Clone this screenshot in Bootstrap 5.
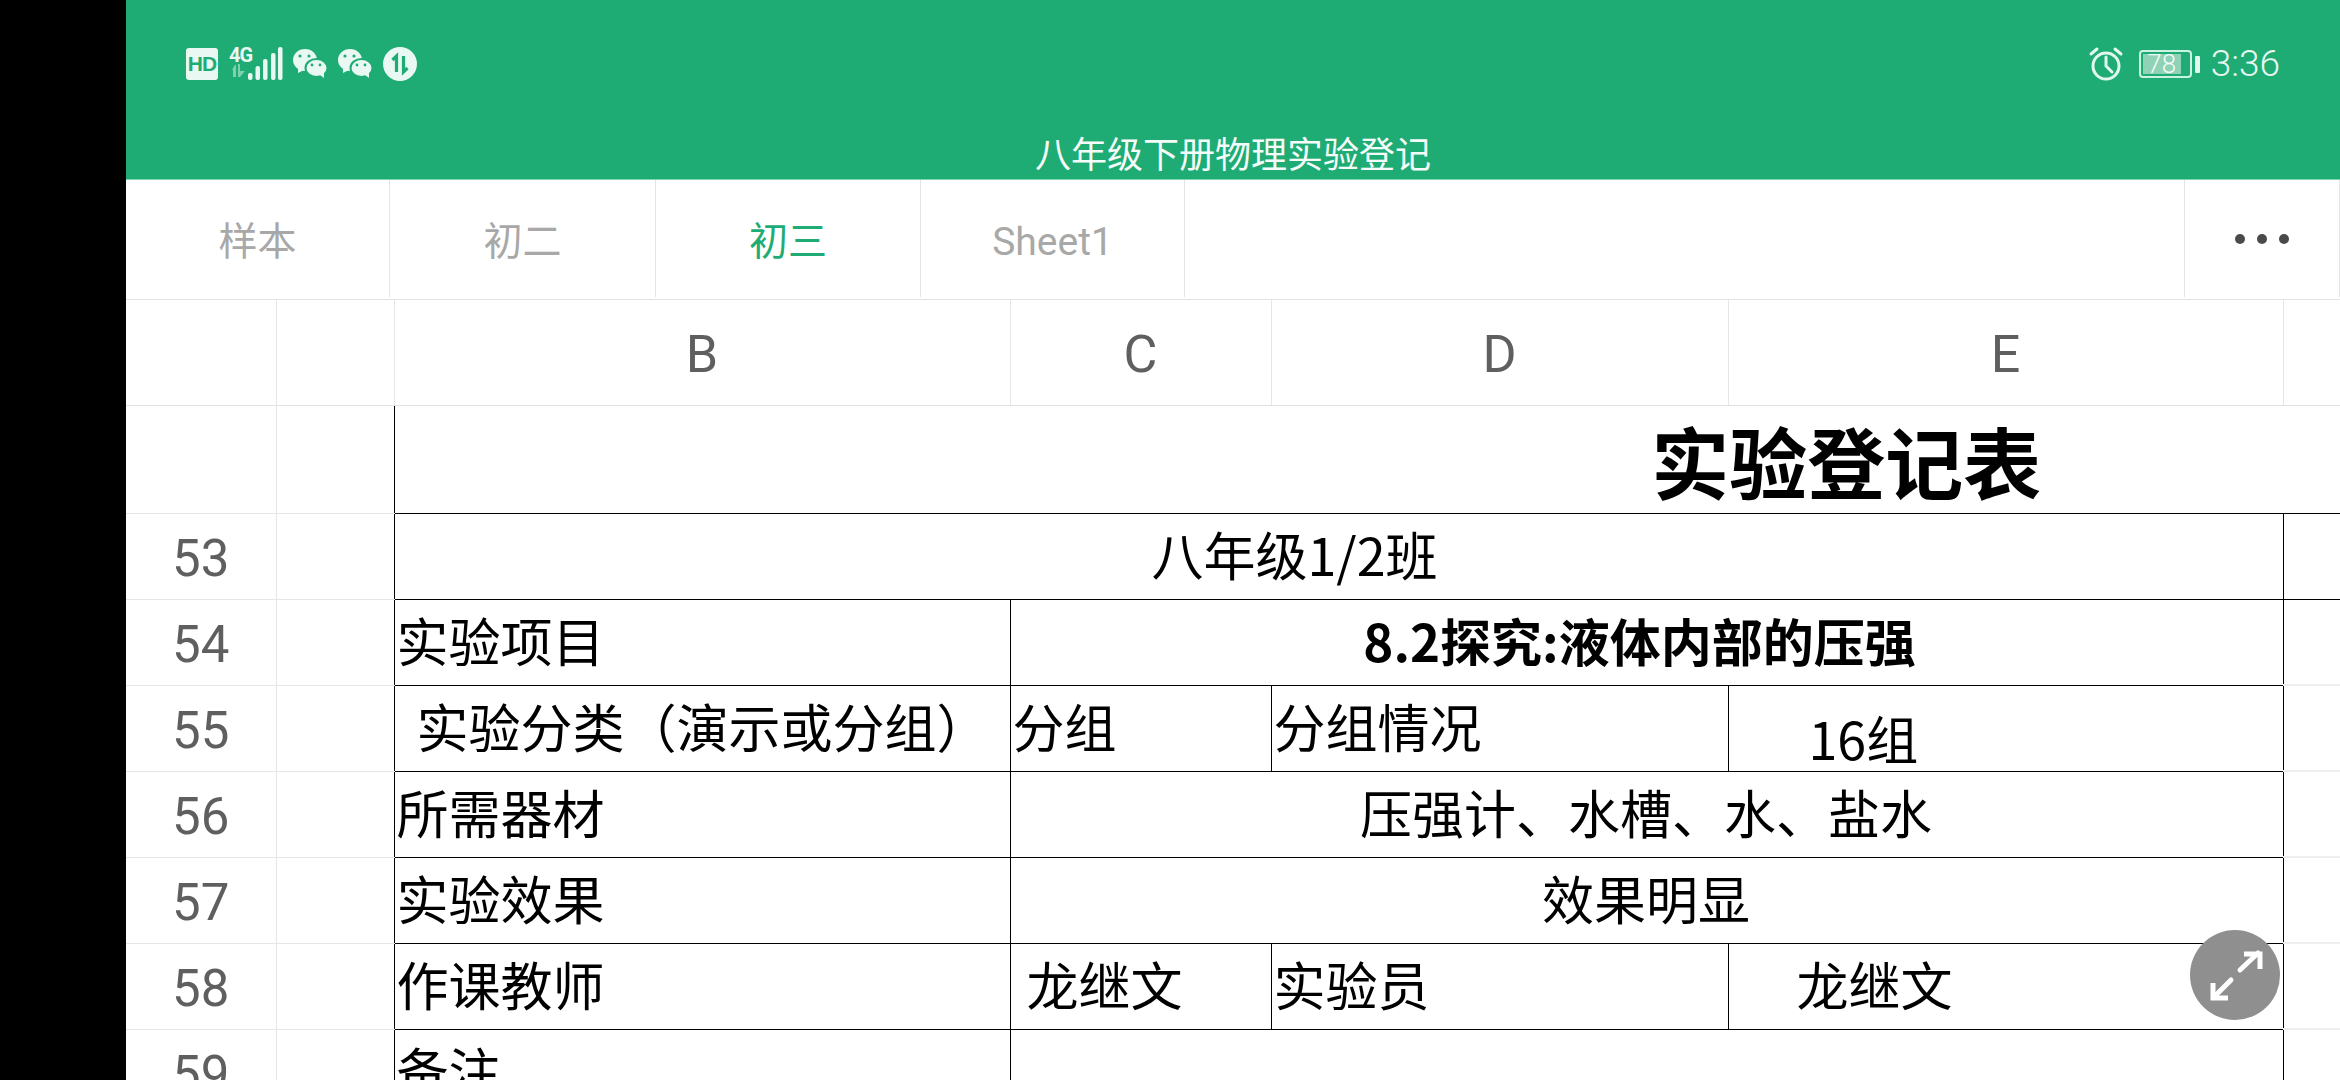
<!DOCTYPE html>
<html lang="zh">
<head>
    <meta charset="UTF-8">
    <title>八年级下册物理实验登记</title>
    <link href="https://cdn.jsdelivr.net/npm/bootstrap@5.3.2/dist/css/bootstrap.min.css" rel="stylesheet">
    <style>
        html, body {
            height: 1080px;
            overflow: hidden;
        }
        body {
            background: #000;
            padding-left: 126px;
            font-family: Roboto, "Noto Sans CJK SC", sans-serif;
        }
        .pantalla {
            height: 1080px;
            background: #fff;
            overflow: hidden;
        }
        .barra-verde {
            height: 180px;
            background: #1fac74;
            color: #fff;
            border-bottom: 1px solid #7fd6b2;
        }
        .barra-estado {
            height: 128px;
            padding: 0 60px 0 60px;
        }
        .titulo-doc {
            font-size: 36px;
            line-height: 50px;
            padding-top: 3px;
            text-align: center;
            color: #f4fbf8;
        }
        .icono-hd {
            width: 32px;
            height: 32px;
            background: #eaf8f3;
            color: #1fac74;
            border-radius: 3px;
            font: 700 21px/32px "Liberation Sans", sans-serif;
            letter-spacing: -1px;
            text-align: center;
            margin-right: 11px;
        }
        .icono-red {
            width: 19px;
            height: 34px;
            font: 700 20px/17px Roboto, sans-serif;
            letter-spacing: -1px;
            color: #eaf8f3;
        }
        .separa { margin-right: 10px; }
        .bateria {
            width: 53px;
            height: 28px;
            border: 2px solid #cdf1e2;
            border-radius: 4px;
            padding: 2px;
            margin-left: 15px;
        }
        .bateria-nivel {
            width: 38px;
            height: 100%;
            background: #8fd2b6;
            font: 300 26px/20px Roboto, sans-serif;
            color: #f4fbf8;
            text-align: center;
        }
        .bateria-punta {
            width: 5px;
            height: 17px;
            background: #e2f7ee;
            border-radius: 1px;
            margin-left: 3px;
        }
        .hora {
            font: 300 37px/40px Roboto, sans-serif;
            color: #e8f8f1;
            margin-left: 11px;
        }
        .hojas {
            height: 120px;
            border-bottom: 1px solid #e2e2e2;
        }
        .hoja {
            height: 117px;
            line-height: 117px;
            padding-top: 4px;
            text-align: center;
            font-size: 39px;
            color: #a8a8a8;
            border-right: 1px solid #e4e4e4;
        }
        .hoja-1 { width: 264px; }
        .hoja-2 { width: 266px; }
        .hoja-3 { width: 265px; color: #1fac74; }
        .hoja-4 { width: 264px; }
        .hoja-mas {
            width: 156px;
            height: 117px;
            margin-left: auto;
            border-left: 1px solid #e4e4e4;
            border-right: 1px solid #e4e4e4;
            gap: 12px;
        }
        .punto {
            width: 10px;
            height: 10px;
            border-radius: 50%;
            background: #4a4a4a;
        }
        .hoja-calculo {
            table-layout: fixed;
            width: 3172px;
            border-collapse: collapse;
            font-family: "Noto Sans CJK SC", sans-serif;
            font-size: 52px;
            color: #000;
        }
        .hoja-calculo td, .hoja-calculo th {
            padding: 0;
            vertical-align: middle;
            white-space: nowrap;
            font-weight: 400;
            line-height: 1.2;
        }
        .col-n { width: 150px; }
        .col-a { width: 118px; }
        .col-b { width: 616px; }
        .col-c { width: 261px; }
        .col-d { width: 457px; }
        .col-e { width: 555px; }
        .col-f { width: 1015px; }
        .fila-cab { height: 105px; }
        .fila-titulo { height: 108px; }
        .fila-datos { height: 86px; }
        .hoja-calculo th {
            border-right: 1px solid #e6e6e6;
            border-bottom: 1px solid #e2e2e2;
            padding-top: 5px;
            font-family: Roboto, sans-serif;
            font-size: 52px;
            color: #5f5f5f;
            text-align: center;
        }
        .hoja-calculo th.sin-borde-der { border-right: 0; }
        .hoja-calculo td.num {
            border-right: 1px solid #e6e6e6;
            border-bottom: 1px solid #e6e6e6;
            padding-top: 5px;
            font-family: Roboto, sans-serif;
            font-size: 51px;
            color: #5f5f5f;
            text-align: center;
        }
        .hoja-calculo td.vacia {
            border-right: 1px solid #000;
            border-bottom: 1px solid #e6e6e6;
        }
        .hoja-calculo td.celda {
            border: 1px solid #000;
            padding: 0 0 3px 2px;
        }
        .hoja-calculo td.fuera {
            border-bottom: 2px solid #eee;
        }
        .hoja-calculo td.fuera-negra {
            border-bottom: 1px solid #000;
        }
        .hoja-calculo td.cabecera-hoja {
            border-bottom: 1px solid #000;
            padding-top: 3px;
            font-size: 78px;
            font-weight: 700;
            text-align: center;
        }
        .hoja-calculo td.centro { text-align: center; padding-right: 3px; }
        .hoja-calculo td.negrita { font-size: 51px; font-weight: 700; padding-right: 16px; }
        .hoja-calculo td.clase-grupo { padding-right: 90px; }
        .hoja-calculo td.sangria-exp { padding-left: 22px; }
        .hoja-calculo td.sangria-c { padding-left: 16px; }
        .hoja-calculo td.sangria-e1 { padding: 20px 0 0 80px; }
        .hoja-calculo td.sangria-e2 { padding-left: 68px; }
        .signo { font-family: "Noto Sans CJK TC", sans-serif; }
        .expandir {
            position: absolute;
            left: 2190px;
            top: 930px;
            width: 90px;
            height: 90px;
            border-radius: 50%;
            background: #8f8f8f;
        }
    </style>
</head>
<body>
    <div class="pantalla">
        <header class="barra-verde">
            <div class="barra-estado d-flex align-items-center">
                <div class="icono-hd">HD</div>
                <div class="icono-red">
                    4G
                    <svg class="d-block" width="18" height="13" viewBox="0 0 18 13" fill="#7fd0ae">
                        <path d="M3 6l3-5h1v12H4V6zM9 0h2v7l5 0-5 6H9z"/>
                    </svg>
                </div>
                <svg width="35" height="34" viewBox="0 0 35 34" class="separa" fill="#eaf8f3">
                    <rect x="0" y="26" width="4.500" height="7" rx="2"/>
                    <rect x="7.500" y="19" width="4.500" height="14" rx="2"/>
                    <rect x="15" y="12" width="4.500" height="21" rx="2"/>
                    <rect x="23" y="6" width="4.500" height="27" rx="2"/>
                    <rect x="30" y="0" width="4.500" height="33" rx="2"/>
                </svg>
                <svg width="35" height="30" viewBox="0 0 35 30" class="separa">
                    <ellipse cx="12" cy="11" rx="12" ry="11" fill="#eaf8f3"/>
                    <path d="M5 18v6l6-3z" fill="#eaf8f3"/>
                    <ellipse cx="23.500" cy="19" rx="11" ry="9" fill="#eaf8f3" stroke="#1fac74" stroke-width="2"/>
                    <path d="M27 26l4 3v-6z" fill="#eaf8f3"/>
                    <circle cx="7" cy="7" r="1.600" fill="#1fac74"/><circle cx="16" cy="7" r="1.600" fill="#1fac74"/>
                    <circle cx="19" cy="16" r="1.400" fill="#1fac74"/><circle cx="27" cy="16" r="1.400" fill="#1fac74"/>
                </svg>
                <svg width="35" height="30" viewBox="0 0 35 30" class="separa">
                    <ellipse cx="12" cy="11" rx="12" ry="11" fill="#eaf8f3"/>
                    <path d="M5 18v6l6-3z" fill="#eaf8f3"/>
                    <ellipse cx="23.500" cy="19" rx="11" ry="9" fill="#eaf8f3" stroke="#1fac74" stroke-width="2"/>
                    <path d="M27 26l4 3v-6z" fill="#eaf8f3"/>
                    <circle cx="7" cy="7" r="1.600" fill="#1fac74"/><circle cx="16" cy="7" r="1.600" fill="#1fac74"/>
                    <circle cx="19" cy="16" r="1.400" fill="#1fac74"/><circle cx="27" cy="16" r="1.400" fill="#1fac74"/>
                </svg>
                <svg width="34" height="34" viewBox="0 0 34 34">
                    <circle cx="17" cy="17" r="17" fill="#eaf8f3"/>
                    <path d="M9.500 13l4-4v16M24.500 21l-4 4V9" fill="none" stroke="#1fac74" stroke-width="3.200"/>
                </svg>
                <div class="ms-auto d-flex align-items-center">
                    <svg width="36" height="36" viewBox="0 0 36 36" fill="none" stroke="#e2f7ee" stroke-width="3">
                        <circle cx="18" cy="20" r="13"/>
                        <path d="M18 11v9l6 6M3 8l6-5M33 8l-6-5" stroke-linecap="round"/>
                    </svg>
                    <div class="bateria"><div class="bateria-nivel">78</div></div>
                    <div class="bateria-punta"></div>
                    <div class="hora">3:36</div>
                </div>
            </div>
            <div class="titulo-doc">八年级下册物理实验登记</div>
        </header>

        <nav class="hojas d-flex">
            <div class="hoja hoja-1">样本</div>
            <div class="hoja hoja-2">初二</div>
            <div class="hoja hoja-3">初三</div>
            <div class="hoja hoja-4">Sheet1</div>
            <div class="hoja-mas d-flex align-items-center justify-content-center">
                <span class="punto"></span><span class="punto"></span><span class="punto"></span>
            </div>
        </nav>

        <table class="hoja-calculo">
            <colgroup>
                <col class="col-n"><col class="col-a"><col class="col-b"><col class="col-c">
                <col class="col-d"><col class="col-e"><col class="col-f">
            </colgroup>
            <tr class="fila-cab">
                <th></th><th></th><th>B</th><th>C</th><th>D</th><th>E</th><th class="sin-borde-der"></th>
            </tr>
            <tr class="fila-titulo">
                <td class="num"></td><td class="vacia"></td>
                <td class="cabecera-hoja" colspan="5">实验登记表</td>
            </tr>
            <tr class="fila-datos">
                <td class="num">53</td><td class="vacia"></td>
                <td class="celda centro clase-grupo" colspan="4">八年级1/2班</td>
                <td class="fuera-negra"></td>
            </tr>
            <tr class="fila-datos">
                <td class="num">54</td><td class="vacia"></td>
                <td class="celda">实验项目</td>
                <td class="celda centro negrita" colspan="3">8.2探究:液体内部的压强</td>
                <td class="fuera"></td>
            </tr>
            <tr class="fila-datos">
                <td class="num">55</td><td class="vacia"></td>
                <td class="celda sangria-exp">实验分类<span class="signo">（</span>演示或分组<span class="signo">）</span></td>
                <td class="celda">分组</td>
                <td class="celda">分组情况</td>
                <td class="celda sangria-e1">16组</td>
                <td class="fuera"></td>
            </tr>
            <tr class="fila-datos">
                <td class="num">56</td><td class="vacia"></td>
                <td class="celda">所需器材</td>
                <td class="celda centro" colspan="3">压强计<span class="signo">、</span>水槽<span class="signo">、</span>水<span class="signo">、</span>盐水</td>
                <td class="fuera"></td>
            </tr>
            <tr class="fila-datos">
                <td class="num">57</td><td class="vacia"></td>
                <td class="celda">实验效果</td>
                <td class="celda centro" colspan="3">效果明显</td>
                <td class="fuera"></td>
            </tr>
            <tr class="fila-datos">
                <td class="num">58</td><td class="vacia"></td>
                <td class="celda">作课教师</td>
                <td class="celda sangria-c">龙继文</td>
                <td class="celda">实验员</td>
                <td class="celda sangria-e2">龙继文</td>
                <td class="fuera"></td>
            </tr>
            <tr class="fila-datos">
                <td class="num">59</td><td class="vacia"></td>
                <td class="celda">备注</td>
                <td class="celda" colspan="3"></td>
                <td class="fuera"></td>
            </tr>
        </table>
    </div>

    <!-- boton flotante de pantalla completa -->
    <div class="expandir">
        <svg width="90" height="90" viewBox="0 0 90 90" fill="none" stroke="#fff" stroke-width="5">
            <path d="M50 40L68 23" stroke-linecap="round"/>
            <path d="M54 24h16v15"/>
            <path d="M41 50L24 67" stroke-linecap="round"/>
            <path d="M23 53v15h15"/>
        </svg>
    </div>

    <script src="https://cdn.jsdelivr.net/npm/bootstrap@5.3.2/dist/js/bootstrap.bundle.min.js"></script>
</body>
</html>
